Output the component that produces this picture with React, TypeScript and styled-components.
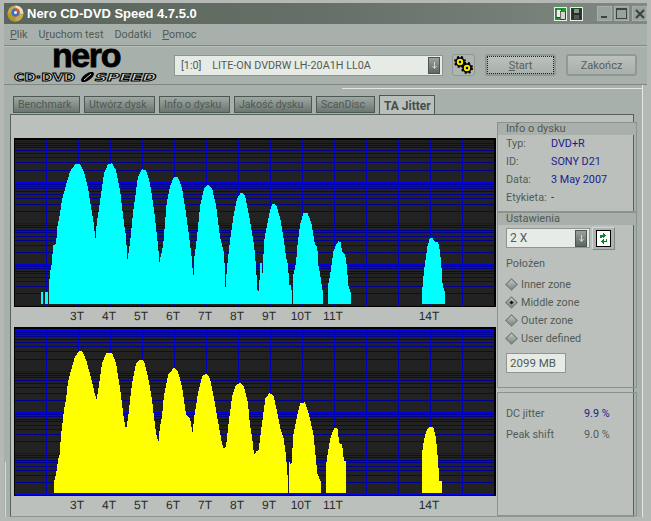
import React from 'react'
import styled, { createGlobalStyle } from 'styled-components'

const GlobalStyle = createGlobalStyle`
  html, body {
    margin: 0;
    padding: 0;
    background: #b4b9b5;
  }
  * {
    box-sizing: border-box;
  }
`

const Window = styled.div`
  width: 651px;
  height: 521px;
  padding: 3px 4px 4px;
  display: flex;
  flex-direction: column;
  overflow: hidden;
  background: #b4b9b5;
  font-family: Roboto, 'Liberation Sans', Arial, sans-serif;
  font-size: 10.8px;
  color: #525c57;
`

const TitleBar = styled.div`
  height: 21px;
  flex: none;
  display: flex;
  align-items: center;
  padding-left: 3px;
  background: linear-gradient(90deg, #5a655b 0%, #667068 50%, #808a83 100%);
`

const AppTitle = styled.div`
  margin-left: 3px;
  flex: 1;
  color: #fff;
  font-family: 'Liberation Sans', Arial, sans-serif;
  font-size: 13px;
  font-weight: 700;
`

const GreenButton = styled.div`
  width: 13px;
  height: 14px;
  margin-right: 3px;
  display: flex;
  border: 1px solid #e8f0e8;
  background: ${(p: { $dark?: boolean }) => (p.$dark ? '#0a5a14' : '#10a020')};
`

const WindowButton = styled.div<{ $gap?: number }>`
  width: 15px;
  height: 15px;
  margin-left: ${(p) => p.$gap ?? 2}px;
  display: flex;
  align-items: center;
  justify-content: center;
  background: #9aa29c;
  border: 1px solid #a9b0ab;
`

const MenuBar = styled.div`
  height: 21px;
  flex: none;
  display: flex;
  align-items: center;
  gap: 11px;
  padding-left: 6px;
  background: #a8b0ab;
  color: #505a55;
`

const Toolbar = styled.div`
  height: 40px;
  flex: none;
  display: flex;
  align-items: center;
  background: #a8b0ab;
  border-top: 1px solid #7f8883;
  border-bottom: 1px solid #7f8883;
  box-shadow: inset 0 1px 0 #b8beb9;
  padding-right: 9px;
`

const Logo = styled.div`
  width: 150px;
  margin: 0 10px 0 10px;
  display: flex;
  flex-direction: column;
  align-items: center;
`

const NeroWord = styled.div`
  color: #000;
  margin-right: 6px;
  font-family: 'Liberation Sans', Arial, sans-serif;
  font-size: 34px;
  font-weight: 700;
  line-height: 15px;
  height: 24px;
  letter-spacing: -1.4px;
  -webkit-text-stroke: 0.8px #000;
`

const SubLogo = styled.div`
  width: 150px;
  display: flex;
  align-items: center;
  height: 10px;
`

const SubWord = styled.span<{ $width: number; $scale: number; $skew?: boolean }>`
  display: inline-block;
  width: ${(p) => p.$width}px;
  white-space: nowrap;
  font-family: 'DejaVu Sans', sans-serif;
  font-weight: 700;
  font-size: 10.5px;
  line-height: 10px;
  color: #d8dcd8;
  -webkit-text-stroke: 0.9px #000;
  transform-origin: left center;
  transform: scaleX(${(p) => p.$scale}) ${(p) => (p.$skew ? 'skewX(-12deg)' : '')};
`

const DriveCombo = styled.div`
  width: 269px;
  height: 21px;
  display: flex;
  align-items: center;
  justify-content: space-between;
  padding: 0 2px 0 6px;
  background: #e6ebe6;
  border: 1px solid #8d9691;
  white-space: pre;
`

const DropButton = styled.div`
  width: 12px;
  height: 17px;
  display: flex;
  align-items: center;
  justify-content: center;
  background: linear-gradient(180deg, #98a19c, #5e6863);
  border: 1px solid #4c5651;
`

const GearButton = styled.div`
  width: 23px;
  height: 22px;
  margin-left: 9px;
  display: flex;
  align-items: center;
  justify-content: center;
  background: #aeb5b0;
  border: 1px solid #8d9691;
  border-radius: 3px;
`

const ActionButton = styled.div`
  width: 71px;
  height: 22px;
  margin-left: 10px;
  display: flex;
  align-items: center;
  justify-content: center;
  background: linear-gradient(180deg, #bcc1bd, #a8afaa);
  border: 2px solid #8f9893;
  border-radius: 3px;
  font-size: 11px;
  color: #55605a;
`

const FocusBox = styled.div`
  width: 100%;
  height: 100%;
  display: flex;
  align-items: center;
  justify-content: center;
  border: 1px dotted #222;
`

const TabArea = styled.div`
  flex: 1;
  min-height: 0;
  position: relative;
  display: flex;
  flex-direction: column;
  padding: 10px 9px 0 6px;
  background: #a8b0ab;
  border-right: 4px solid #b4b9b5;
  box-shadow: inset -1px 0 0 #e4e8e4;

  &::before {
    content: '';
    position: absolute;
    top: 3px;
    left: 338px;
    right: 0;
    height: 1px;
    background: #e4e8e4;
  }

  &::after {
    content: '';
    position: absolute;
    left: 1px;
    bottom: 0;
    width: 1px;
    height: 55px;
    background: #d8dcd8;
  }
`

const TabRow = styled.div`
  height: 19px;
  flex: none;
  display: flex;
  align-items: flex-end;
  gap: 4px;
  padding-left: 3px;
`

const Tab = styled.div<{ $width: number; $active?: boolean }>`
  width: ${(p) => p.$width}px;
  height: ${(p) => (p.$active ? '20px' : '17px')};
  margin-bottom: ${(p) => (p.$active ? '-1px' : '1px')};
  padding-left: 4px;
  display: flex;
  align-items: center;
  white-space: nowrap;
  overflow: hidden;
  border: 1px solid #4c5853;
  border-bottom: ${(p) => (p.$active ? 'none' : '1px solid #4c5853')};
  background: ${(p) => (p.$active ? '#b9bfba' : 'linear-gradient(180deg, #a0a8a3, #6c7671)')};
  color: ${(p) => (p.$active ? '#454f4a' : '#4e5a54')};
  font-weight: ${(p) => (p.$active ? 700 : 400)};
  font-size: ${(p) => (p.$active ? '12px' : '10.6px')};
`

const Panel = styled.div`
  flex: 1;
  min-height: 0;
  display: flex;
  background: #bbc0bc;
  border: 1px solid #566159;
  border-bottom: 1px solid #8d9691;
`

const ChartColumn = styled.div`
  width: 486px;
  flex: none;
  padding: 23px 0 0 3px;
  display: flex;
  flex-direction: column;
`

const ChartSvg = styled.svg`
  display: block;
  flex: none;
  font-family: 'Liberation Sans', Arial, sans-serif;
  font-size: 12px;
`

const Sidebar = styled.div`
  width: 140px;
  flex: none;
  padding-top: 7px;
  display: flex;
  flex-direction: column;
`

const Group = styled.div<{ $height?: number }>`
  height: ${(p) => (p.$height ? `${p.$height}px` : 'auto')};
  flex: ${(p) => (p.$height ? 'none' : 1)};
  border: 1px solid #8a938e;
  padding: 0 0 0 8px;
  margin-bottom: ${(p) => (p.$height === 176 ? '4px' : '0')};
`

const GroupTitle = styled.div`
  height: 12px;
  margin: 0 0 0 -8px;
  padding-left: 8px;
  background: #a9afaa;
  font-size: 11px;
  line-height: 12px;
  color: #505a55;
`

const InfoGrid = styled.div`
  display: grid;
  grid-template-columns: 45px 1fr;
  grid-auto-rows: 18px;
  align-items: center;
  margin-top: -1px;
`

const InfoValue = styled.span`
  color: #1c1c8c;
`

const SpeedRow = styled.div`
  margin-top: 3px;
  display: flex;
  align-items: flex-start;
  height: 20px;
`

const SpeedCombo = styled.div`
  width: 84px;
  height: 20px;
  display: flex;
  align-items: center;
  justify-content: space-between;
  padding: 0 2px 0 3px;
  background: #e6ebe6;
  border: 1px solid #8d9691;
  font-size: 12px;
`

const RefreshButton = styled.div`
  width: 23px;
  height: 23px;
  margin: -1px 0 0 2px;
  display: flex;
  align-items: center;
  justify-content: center;
  background: #aeb5b0;
  border: 1px solid;
  border-color: #d4d8d4 #7f8883 #7f8883 #d4d8d4;
`

const SectionLabel = styled.div`
  height: 18px;
  margin-top: 7px;
  line-height: 18px;
`

const RadioList = styled.div`
  margin-top: 2px;
  display: flex;
  flex-direction: column;
`

const RadioRow = styled.div`
  height: 18px;
  display: flex;
  align-items: center;
  gap: 5px;
`

const Diamond = styled.span<{ $checked?: boolean }>`
  width: 9px;
  height: 9px;
  margin-left: 1px;
  flex: none;
  display: flex;
  align-items: center;
  justify-content: center;
  transform: rotate(45deg);
  background: linear-gradient(135deg, #c4c9c5, #78827c);
  border: 1px solid #66706b;

  &::after {
    content: '';
    width: 3px;
    height: 3px;
    background: ${(p) => (p.$checked ? '#111' : 'transparent')};
  }
`

const SizeInput = styled.div`
  width: 60px;
  height: 20px;
  margin-top: 6px;
  padding-left: 3px;
  line-height: 18px;
  background: #e6ebe6;
  border: 1px solid #8d9691;
  font-size: 11.5px;
`

const ResultGrid = styled.div`
  padding-top: 10px;
  display: grid;
  grid-template-columns: 78px 1fr;
  grid-auto-rows: 21px;
  align-items: center;
`

type Pt = [number, number]

// points read off the chart, x and y in 3x pixels of the crop
const cyanPeaks: Pt[][] = [
  [[123, 522], [123, 487], [129, 487], [129, 522]],
  [[135, 522], [135, 487], [144, 487], [144, 522]],
  [
    [147, 522], [147, 466], [150, 425], [156, 400], [159, 345], [168, 342], [172, 290], [180, 250], [186, 210], [198, 165],
    [210, 125], [225, 103], [240, 103], [252, 125], [264, 175], [276, 250], [282, 285], [286, 330], [290, 282], [300, 215],
    [312, 130], [324, 103], [336, 100], [348, 120], [360, 180], [372, 280], [378, 320], [382, 390], [386, 365], [390, 340],
    [400, 240], [414, 140], [426, 118], [438, 120], [450, 160], [462, 240], [474, 345], [477, 380], [478, 398], [482, 380],
    [490, 340], [500, 220], [510, 170], [522, 140], [534, 142], [546, 175], [558, 250], [570, 340], [576, 390], [580, 450],
    [582, 390], [590, 330], [600, 230], [612, 175], [624, 162], [636, 175], [648, 225], [660, 320], [672, 370], [675, 425],
    [677, 485], [680, 420], [690, 330], [700, 260], [710, 210], [722, 187], [735, 195], [750, 273], [762, 345], [768, 410],
    [772, 480], [776, 485], [778, 465], [780, 400], [786, 400], [788, 437], [792, 335], [800, 290], [810, 240], [816, 222],
    [828, 224], [840, 262], [850, 320], [858, 380], [864, 405], [868, 465], [874, 465], [876, 522],
  ],
  [
    [879, 522], [879, 438], [888, 400], [892, 350], [900, 285], [910, 250], [922, 247], [934, 280], [945, 345], [952, 350],
    [954, 400], [960, 430], [965, 465], [969, 490], [969, 522],
  ],
  [
    [984, 522], [984, 465], [990, 438], [1000, 365], [1008, 345], [1016, 333], [1022, 337], [1026, 365], [1035, 372],
    [1040, 405], [1045, 465], [1053, 490], [1053, 522],
  ],
  [
    [1266, 522], [1266, 487], [1272, 420], [1282, 350], [1290, 322], [1298, 325], [1305, 335], [1314, 335], [1320, 365],
    [1324, 405], [1328, 465], [1335, 487], [1335, 522],
  ],
]

const yellowPeaks: Pt[][] = [
  [
    [162, 518], [162, 485], [168, 462], [174, 420], [180, 400], [182, 355], [186, 320], [192, 270], [198, 238], [204, 185],
    [212, 155], [225, 110], [238, 93], [248, 95], [260, 125], [272, 170], [284, 220], [290, 240], [296, 200], [306, 130],
    [318, 100], [336, 98], [348, 130], [360, 205], [372, 300], [378, 328], [384, 295], [396, 190], [408, 130], [420, 118],
    [432, 122], [444, 170], [456, 240], [468, 340], [475, 368], [480, 320], [486, 290], [492, 225], [504, 165], [522, 142],
    [534, 155], [546, 200], [558, 285], [570, 295], [578, 340], [582, 295], [594, 220], [606, 170], [618, 160], [630, 175],
    [642, 235], [654, 305], [664, 360], [670, 385], [678, 380], [684, 325], [696, 230], [708, 195], [720, 188], [732, 200],
    [744, 250], [750, 315], [756, 350], [762, 405], [768, 395], [776, 390], [782, 340], [788, 295], [796, 235], [808, 220],
    [820, 225], [830, 270], [842, 330], [850, 350], [858, 405], [864, 485], [865, 518],
  ],
  [
    [867, 518], [867, 423], [874, 435], [880, 345], [892, 285], [900, 250], [915, 247], [927, 285], [940, 340], [946, 400],
    [952, 462], [963, 485], [963, 518],
  ],
  [
    [978, 518], [978, 435], [984, 395], [992, 350], [1002, 325], [1012, 322], [1018, 370], [1026, 372], [1032, 422],
    [1038, 422], [1038, 518],
  ],
  [
    [1266, 518], [1266, 400], [1270, 370], [1278, 335], [1286, 322], [1300, 322], [1308, 355], [1314, 420], [1318, 482],
    [1326, 484], [1326, 518],
  ],
]

const yAt = (pts: Pt[], x: number) => {
  for (let i = 0; i < pts.length - 1; i++) {
    const [x0, y0] = pts[i]
    const [x1, y1] = pts[i + 1]
    if (x >= x0 && x <= x1 && x1 > x0) return y0 + ((y1 - y0) * (x - x0)) / (x1 - x0)
  }
  return pts[pts.length - 1][1]
}

// turn the read-off outline into the chart's stepped columns
const stepPath = (pts: Pt[], top: number) => {
  const start = Math.round(pts[0][0] / 3)
  const end = Math.round(pts[pts.length - 1][0] / 3)
  const base = Math.round(top + pts[0][1] / 3)
  let d = `M${start} ${base}`
  for (let x = start; x < end; x++) {
    const y = Math.round(top + yAt(pts, x * 3 + 1.5) / 3)
    d += `V${y}H${x + 1}`
  }
  return `${d}V${base}Z`
}

const LOG_STEPS = [10, 9, 8, 7, 6, 5, 4, 3, 2]
const xLabels: [string, number][] = [
  ['3T', 77], ['4T', 109], ['5T', 141], ['6T', 173], ['7T', 205], ['8T', 237], ['9T', 269], ['10T', 301], ['11T', 333], ['14T', 429],
]

type ChartProps = {
  top: number
  gridTop: number
  offset: number
  color: string
  peaks: Pt[][]
  height: number
  thick: number[]
}

const Chart = ({ top, gridTop, offset, color, peaks, height, thick }: ChartProps) => {
  const rows: { y: number; major: boolean; bold: boolean }[] = []
  for (let d = 0; d < 4; d++) {
    LOG_STEPS.forEach((n) => {
      rows.push({
        y: Math.round(gridTop + 41.1 * d + 41.1 * (1 - Math.log10(n))),
        major: n === 10,
        bold: n === 10 && thick.includes(d),
      })
    })
  }
  const bottom = Math.round(gridTop + 41.1 * 4)
  return (
    <ChartSvg width={482} height={height} viewBox={`14 ${top} 482 ${height}`} shapeRendering="crispEdges">
      <rect x={14} y={top} width={482} height={169} fill="#000" />
      <rect x={15} y={top + 2} width={479} height={165} fill="#222" />
      {rows.map((r) => (
        <rect key={r.y} x={15} y={r.y} width={479} height={r.bold ? 2 : 1} fill={r.major ? '#0000e0' : '#000092'} />
      ))}
      <rect x={15} y={bottom} width={479} height={1} fill="#0000ff" />
      {Array.from({ length: 14 }, (_, k) => (
        <rect key={k} x={46 + 32 * k} y={top + 2} width={1} height={165} fill="#0000c0" />
      ))}
      {peaks.map((p, i) => (
        <path key={i} d={stepPath(p, offset)} fill={color} />
      ))}
      {xLabels.map(([t, x]) => (
        <text key={t} x={x} y={top + 182} textAnchor="middle" fill="#2a2a2a" textRendering="geometricPrecision">
          {t}
        </text>
      ))}
    </ChartSvg>
  )
}

const DownArrow = () => (
  <svg width="7" height="9" viewBox="0 0 7 9">
    <path d="M3.5 1V7M1.5 5L3.5 7.5L5.5 5" stroke="#d4d8d4" fill="none" />
  </svg>
)

const AppIcon = () => (
  <svg width="17" height="17" viewBox="0 0 17 17">
    <circle cx="8.5" cy="8.5" r="8" fill="#c9a94a" />
    <path d="M8.5 .5A8 8 0 0 1 16.5 8.5L8.5 8.5Z" fill="#e8e0c0" />
    <path d="M.5 8.5A8 8 0 0 0 8.5 16.5L8.5 8.5Z" fill="#b8962c" />
    <circle cx="8.5" cy="7.5" r="4.2" fill="#3a6fc0" />
    <path d="M8.5 3.3A4.2 4.2 0 0 1 12.7 7.5L8.5 7.5Z" fill="#e0562a" />
    <circle cx="8.5" cy="7.5" r="1.5" fill="#f4f4f4" />
  </svg>
)

const CopyIcon = () => (
  <svg width="11" height="12" viewBox="0 0 11 12" shapeRendering="crispEdges">
    <path d="M1 1H6V9H1Z" fill="#e8f0e8" stroke="#222" strokeWidth=".6" />
    <path d="M5 3H10V11H5Z" fill="#cfd8cf" stroke="#222" strokeWidth=".6" />
  </svg>
)

const FloppyIcon = () => (
  <svg width="11" height="12" viewBox="0 0 11 12" shapeRendering="crispEdges">
    <rect x="1" y="1" width="9" height="10" fill="#2a2e2a" />
    <rect x="3" y="1" width="5" height="4" fill="#8a908a" />
    <rect x="3" y="7" width="5" height="4" fill="#555a55" />
  </svg>
)

const GearsIcon = () => (
  <svg width="19" height="18" viewBox="0 0 19 18">
    <circle cx="6" cy="6" r="4" fill="#f4e800" stroke="#000" strokeWidth="1.6" />
    <circle cx="6" cy="6" r="5" fill="none" stroke="#000" strokeWidth="2" strokeDasharray="2 2" />
    <circle cx="6" cy="6" r="1.2" fill="#000" />
    <circle cx="13" cy="12" r="4" fill="#f4e800" stroke="#000" strokeWidth="1.6" />
    <circle cx="13" cy="12" r="5" fill="none" stroke="#000" strokeWidth="2" strokeDasharray="2 2" />
    <circle cx="13" cy="12" r="1.2" fill="#000" />
  </svg>
)

const RefreshIcon = () => (
  <svg width="15" height="17" viewBox="0 0 15 17" shapeRendering="crispEdges">
    <rect x=".5" y=".5" width="14" height="16" fill="#fff" stroke="#000" />
    <path d="M4 8V5H7V3L10 5.5L7 8V6.5H5.5V8Z" fill="#0a8a1a" />
    <path d="M11 9V12H8V14L5 11.5L8 9V10.5H9.5V9Z" fill="#0a8a1a" />
  </svg>
)

const App = () => {
  return (
    <Window>
      <GlobalStyle />
      <TitleBar>
        <AppIcon />
        <AppTitle>Nero CD-DVD Speed 4.7.5.0</AppTitle>
        <GreenButton>
          <CopyIcon />
        </GreenButton>
        <GreenButton $dark>
          <FloppyIcon />
        </GreenButton>
        <WindowButton $gap={11}>
          <svg width="9" height="9" viewBox="0 0 9 9" shapeRendering="crispEdges">
            <rect x="1" y="7" width="6" height="2" fill="#3c4640" />
          </svg>
        </WindowButton>
        <WindowButton>
          <svg width="11" height="11" viewBox="0 0 11 11" shapeRendering="crispEdges">
            <path d="M.5 1.5H10.5V10.5H.5Z" fill="none" stroke="#3c4640" />
            <rect x="0" y="0" width="11" height="2" fill="#3c4640" />
          </svg>
        </WindowButton>
        <WindowButton $gap={3}>
          <svg width="10" height="10" viewBox="0 0 10 10">
            <path d="M1 1L9 9M9 1L1 9" stroke="#3c4640" strokeWidth="2.2" />
          </svg>
        </WindowButton>
      </TitleBar>
      <MenuBar>
        <span>
          <u>P</u>lik
        </span>
        <span>
          U<u>r</u>uchom test
        </span>
        <span>Dodatki</span>
        <span>
          <u>P</u>omoc
        </span>
      </MenuBar>
      <Toolbar>
        <Logo>
          <NeroWord>nero</NeroWord>
          <SubLogo>
            <SubWord $width={66} $scale={1.33}>
              CD·DVD
            </SubWord>
            <svg width="15" height="10" viewBox="0 0 15 10">
              <ellipse cx="7.5" cy="5" rx="7.5" ry="3.4" transform="rotate(-35 7.5 5)" fill="#000" />
              <path d="M4 8L11 2" stroke="#d8dcd8" strokeWidth="1" />
            </svg>
            <SubWord $width={62} $scale={1.6} $skew>
              SPEED
            </SubWord>
          </SubLogo>
        </Logo>
        <DriveCombo>
          <span>{'[1:0]    LITE-ON DVDRW LH-20A1H LL0A'}</span>
          <DropButton>
            <DownArrow />
          </DropButton>
        </DriveCombo>
        <GearButton>
          <GearsIcon />
        </GearButton>
        <ActionButton>
          <FocusBox>
            <span>
              <u>S</u>tart
            </span>
          </FocusBox>
        </ActionButton>
        <ActionButton>Zakończ</ActionButton>
      </Toolbar>
      <TabArea>
        <TabRow>
          <Tab $width={67}>Benchmark</Tab>
          <Tab $width={71}>Utwórz dysk</Tab>
          <Tab $width={71}>Info o dysku</Tab>
          <Tab $width={78}>Jakość dysku</Tab>
          <Tab $width={59}>ScanDisc</Tab>
          <Tab $width={56} $active>
            TA Jitter
          </Tab>
        </TabRow>
        <Panel>
          <ChartColumn>
            <Chart top={138} gridTop={141} offset={130} color="#00ffff" peaks={cyanPeaks} height={189} thick={[1, 3]} />
            <Chart top={327} gridTop={330} offset={320} color="#ffff00" peaks={yellowPeaks} height={190} thick={[2]} />
          </ChartColumn>
          <Sidebar>
            <Group $height={90}>
              <GroupTitle>Info o dysku</GroupTitle>
              <InfoGrid>
                <span>Typ:</span>
                <InfoValue>DVD+R</InfoValue>
                <span>ID:</span>
                <InfoValue>SONY D21</InfoValue>
                <span>Data:</span>
                <InfoValue>3 May 2007</InfoValue>
                <span>Etykieta:</span>
                <InfoValue>-</InfoValue>
              </InfoGrid>
            </Group>
            <Group $height={176}>
              <GroupTitle>Ustawienia</GroupTitle>
              <SpeedRow>
                <SpeedCombo>
                  <span>2 X</span>
                  <DropButton>
                    <DownArrow />
                  </DropButton>
                </SpeedCombo>
                <RefreshButton>
                  <RefreshIcon />
                </RefreshButton>
              </SpeedRow>
              <SectionLabel>Położen</SectionLabel>
              <RadioList>
                <RadioRow>
                  <Diamond />
                  Inner zone
                </RadioRow>
                <RadioRow>
                  <Diamond $checked />
                  Middle zone
                </RadioRow>
                <RadioRow>
                  <Diamond />
                  Outer zone
                </RadioRow>
                <RadioRow>
                  <Diamond />
                  User defined
                </RadioRow>
              </RadioList>
              <SizeInput>2099 MB</SizeInput>
            </Group>
            <Group>
              <ResultGrid>
                <span>DC jitter</span>
                <InfoValue>9.9 %</InfoValue>
                <span>Peak shift</span>
                <span>9.0 %</span>
              </ResultGrid>
            </Group>
          </Sidebar>
        </Panel>
      </TabArea>
    </Window>
  )
}

export default App
